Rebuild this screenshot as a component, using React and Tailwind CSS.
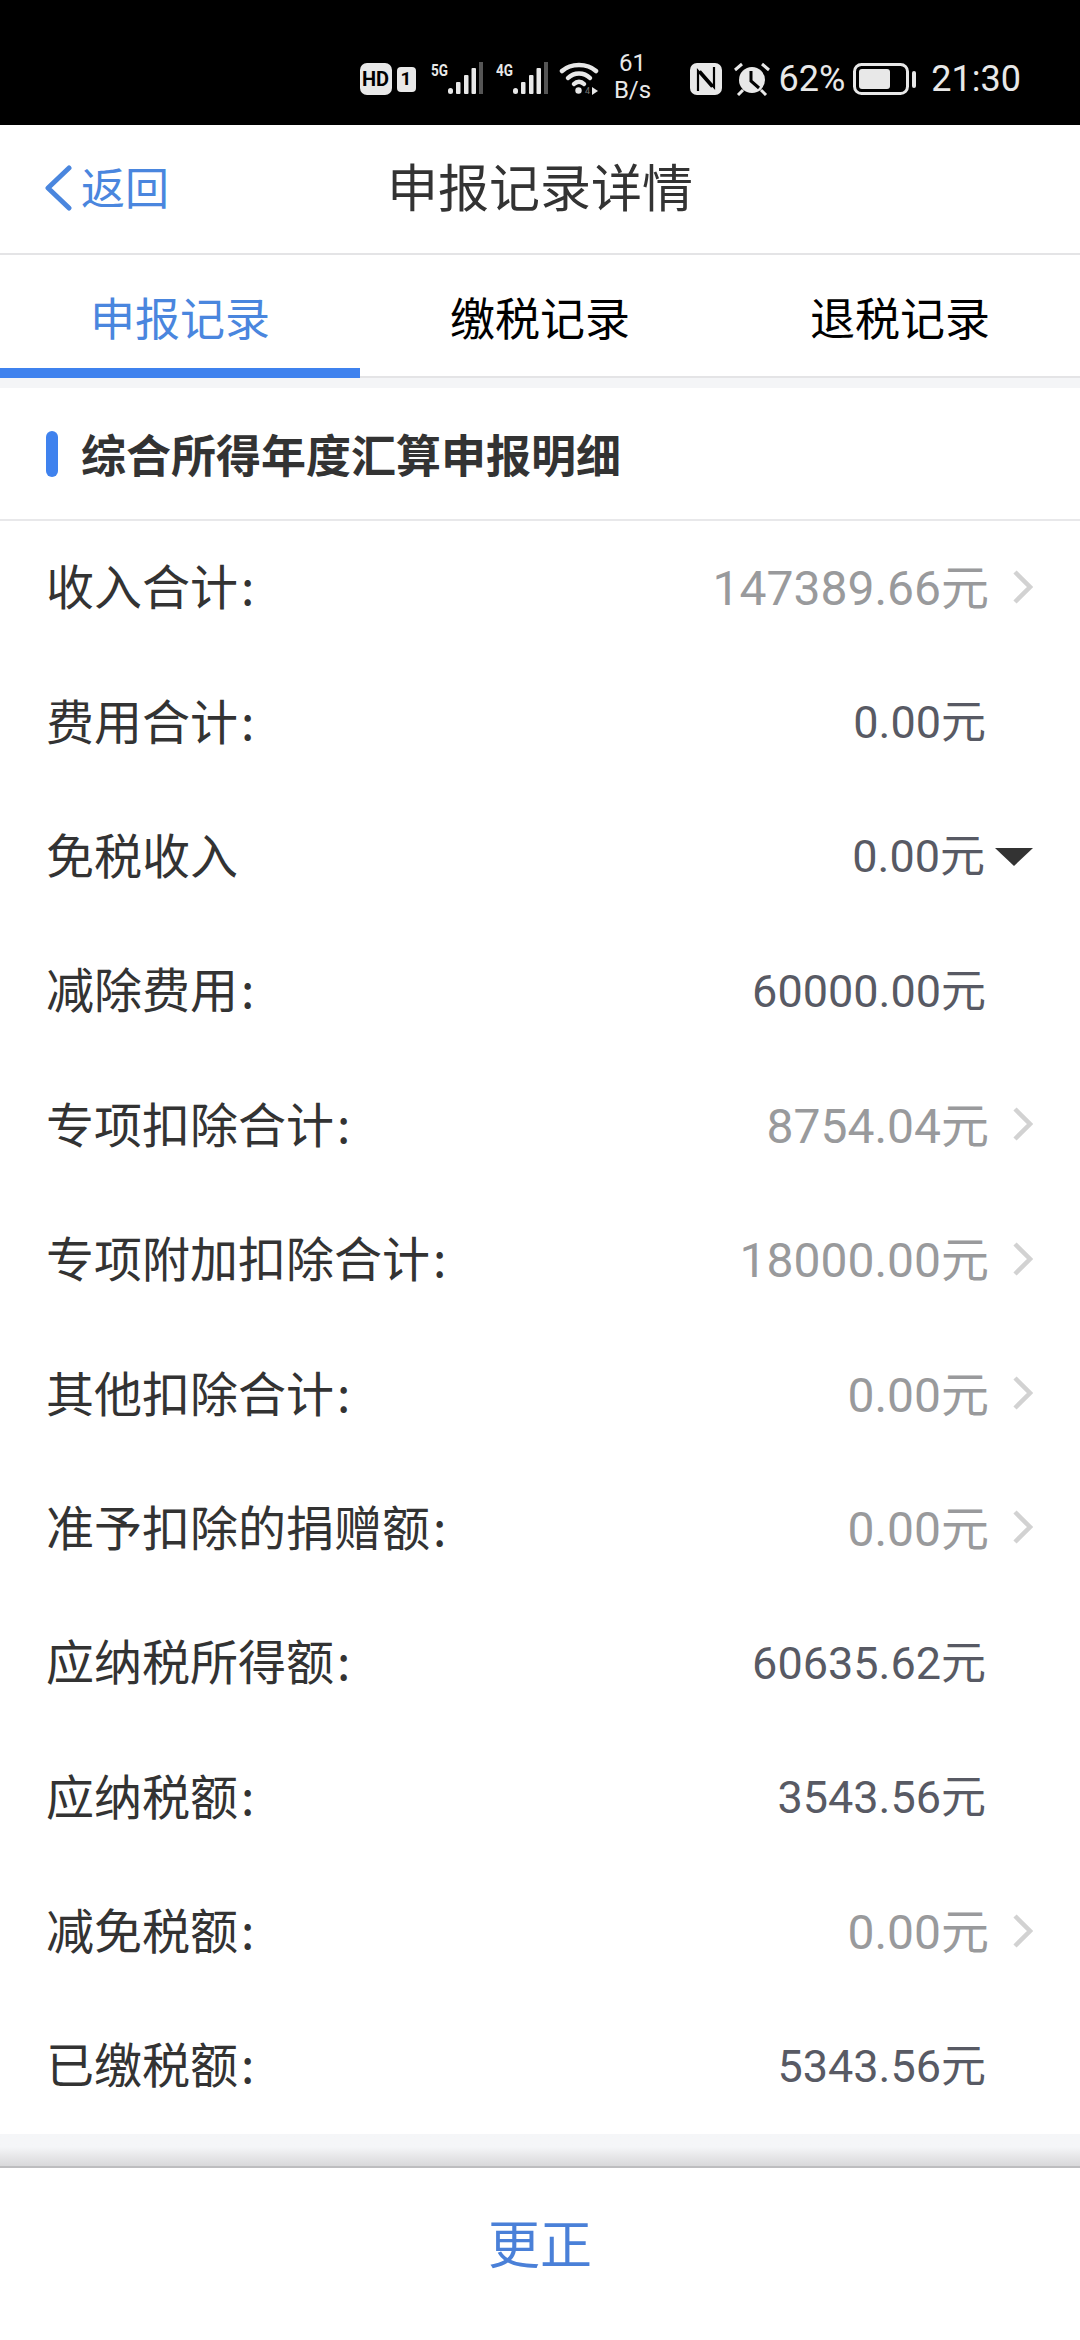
const CJK = '"Noto Sans CJK SC", sans-serif';

const rows = [
  { label: '收入合计', colon: true, value: '147389.66元', link: true },
  { label: '费用合计', colon: true, value: '0.00元' },
  { label: '免税收入', value: '0.00元', expand: true },
  { label: '减除费用', colon: true, value: '60000.00元' },
  { label: '专项扣除合计', colon: true, value: '8754.04元', link: true },
  { label: '专项附加扣除合计', colon: true, value: '18000.00元', link: true },
  { label: '其他扣除合计', colon: true, value: '0.00元', link: true },
  { label: '准予扣除的捐赠额', colon: true, value: '0.00元', link: true },
  { label: '应纳税所得额', colon: true, value: '60635.62元' },
  { label: '应纳税额', colon: true, value: '3543.56元' },
  { label: '减免税额', colon: true, value: '0.00元', link: true },
  { label: '已缴税额', colon: true, value: '5343.56元' },
];

function Bars({ tag }) {
  return (
    <svg width="53" height="34" viewBox="0 0 53 34" fill="#e8e8e8">
      <text x="0" y="14" fontSize="16" fontWeight="700" fontFamily="Roboto, sans-serif" textLength="17" lengthAdjust="spacingAndGlyphs">{tag}</text>
      <rect x="17" y="26" width="5" height="6" rx="2.5" />
      <rect x="25" y="20" width="4.5" height="12" rx="1" />
      <rect x="33" y="13" width="4.5" height="19" rx="1" />
      <rect x="40.5" y="6" width="4.5" height="26" rx="1" />
      <rect x="48" y="0" width="4" height="32" fill="#555555" />
    </svg>
  );
}

function StatusBar() {
  return (
    <div className="h-[125px] bg-black flex items-center justify-end pr-[59px] pt-[33px] text-[#e8e8e8] font-['Roboto',sans-serif]">
      <div className="w-[32px] h-[32px] rounded-[7px] bg-[#e8e8e8] text-black text-[20px] font-bold flex items-center justify-center">HD</div>
      <div className="ml-[5px] w-[19px] h-[25px] rounded-[4px] bg-[#e8e8e8] text-black text-[19px] font-bold flex items-center justify-center">1</div>
      <div className="ml-[15px]"><Bars tag="5G" /></div>
      <div className="ml-[12px]"><Bars tag="4G" /></div>
      <svg className="ml-[10px]" width="40" height="34" viewBox="0 0 40 34" fill="none" stroke="#e8e8e8" strokeWidth="4.5" strokeLinecap="round">
        <path d="M3 9 C12 1 28 1 37 9" />
        <path d="M9 16 C15 10 25 10 31 16" />
        <path d="M15 22 C18 19 22 19 25 22" />
        <circle cx="19.5" cy="28.5" r="3.2" fill="#e8e8e8" stroke="none" />
        <text x="26" y="32" fontSize="9" fill="#777777" stroke="none" fontFamily="Roboto, sans-serif">4</text>
        <path d="M33 25 L39 29 L33 33 Z" fill="#e8e8e8" stroke="none" />
      </svg>
      <div className="ml-[14px] w-[40px] flex flex-col items-center text-[24px] leading-[27px] -mt-[4px]">
        <span>61</span>
        <span>B/s</span>
      </div>
      <svg className="ml-[37px]" width="32" height="32" viewBox="0 0 32 32" fill="none">
        <rect width="32" height="32" rx="7" fill="#e8e8e8" />
        <path d="M8 28 V8 L22 24 M24 4 V24 L10 8" stroke="#000000" strokeWidth="2.2" />
      </svg>
      <svg className="ml-[12px]" width="36" height="34" viewBox="0 0 36 34" fill="#e8e8e8">
        <circle cx="18" cy="18" r="13" />
        <path d="M17 9 V19 L25 26" stroke="#000000" strokeWidth="3" fill="none" />
        <path d="M1 8 L8 2 M35 8 L28 2 M4 33 L9 28 M32 33 L27 28" stroke="#e8e8e8" strokeWidth="3" />
      </svg>
      <span className="ml-[9px] text-[36px] leading-none">62%</span>
      <svg className="ml-[8px]" width="63" height="32" viewBox="0 0 63 32">
        <rect x="1.5" y="1.5" width="53" height="29" rx="7" fill="none" stroke="#e8e8e8" strokeWidth="3" />
        <rect x="6" y="6" width="31" height="20" rx="3" fill="#e8e8e8" />
        <rect x="59" y="8" width="4" height="17" rx="2" fill="#e8e8e8" />
      </svg>
      <span className="ml-[15px] text-[36px] leading-none">21:30</span>
    </div>
  );
}

function Row({ label, colon, value, link, expand }) {
  return (
    <div className="h-[134.4px] flex items-center pl-[46px]">
      <span className="flex-1 pb-[8px] text-[48px] text-[#333333]">
        {label}
        {colon && <span className="ml-[3px]">:</span>}
      </span>
      {link ? (
        <span className="mr-[12px] pt-[2px] text-[48px] text-[#999a9c] font-['Roboto','Noto_Sans_CJK_SC',sans-serif]">{value}</span>
      ) : (
        <span className={`${expand ? 'mr-[16px]' : 'mr-[15px]'} text-[45px] text-[#585a64] font-['Roboto','Noto_Sans_CJK_SC',sans-serif]`}>{value}</span>
      )}
      <div className="w-[32px] mr-[47px] flex justify-end">
        {link && (
          <svg className="shrink-0 -mt-[3px]" width="20" height="34" viewBox="0 0 20 34" fill="none" stroke="#d2d2d2" strokeWidth="4.5">
            <path d="M2 2 L17 17 L2 32" />
          </svg>
        )}
        {expand && <div className="shrink-0 w-0 h-0 border-x-[19px] border-x-transparent border-t-[18px] border-t-[#333333]" />}
      </div>
    </div>
  );
}

export default function App() {
  return (
    <div className="w-[1080px] h-[2340px] bg-white flex flex-col overflow-hidden" style={{ fontFamily: CJK }}>
      <StatusBar />

      <div className="relative h-[130px] flex items-center justify-center border-b-[2px] border-[#e4e4e6]">
        <div className="absolute left-[44px] top-0 h-full flex items-center text-[#4a86de]">
          <svg className="-mt-[2px]" width="28" height="46" viewBox="0 0 28 46" fill="none" stroke="#4a86de" strokeWidth="5" strokeLinecap="round" strokeLinejoin="round">
            <path d="M25 3 L4 23 L25 43" />
          </svg>
          <span className="ml-[9px] pb-[6px] text-[44px]">返回</span>
        </div>
        <span className="pb-[8px] text-[51px] text-[#333333]">申报记录详情</span>
      </div>

      <div className="relative h-[123px] flex border-b-[2px] border-[#e4e4e6]">
        {['申报记录', '缴税记录', '退税记录'].map((tab, i) => (
          <div key={tab} className={`flex-1 flex items-center justify-center pt-[3px] text-[45px] ${i === 0 ? 'text-[#4a86de]' : 'text-black'}`}>
            {tab}
          </div>
        ))}
        <div className="absolute left-0 bottom-[-2px] w-[360px] h-[10px] bg-[#3f82ee]" />
      </div>

      <div className="h-[10px] bg-[#f4f5f7]" />

      <div className="h-[133px] flex items-center pl-[46px] border-b-[2px] border-[#e8e8ea]">
        <div className="w-[12px] h-[46px] rounded-full bg-[#3f82ee]" />
        <span className="ml-[23px] text-[45px] font-bold text-[#333333]">综合所得年度汇算申报明细</span>
      </div>

      <div>
        {rows.map(row => <Row key={row.label} {...row} />)}
      </div>

      <div className="h-[32px] bg-gradient-to-b from-[#f5f6f8] from-40% to-[#d8d8da]" />
      <div className="flex-1 border-t-[2px] border-[#bdbdbf] flex items-center justify-center pb-[24px]">
        <span className="text-[52px] text-[#4a80d8]">更正</span>
      </div>
    </div>
  );
}
